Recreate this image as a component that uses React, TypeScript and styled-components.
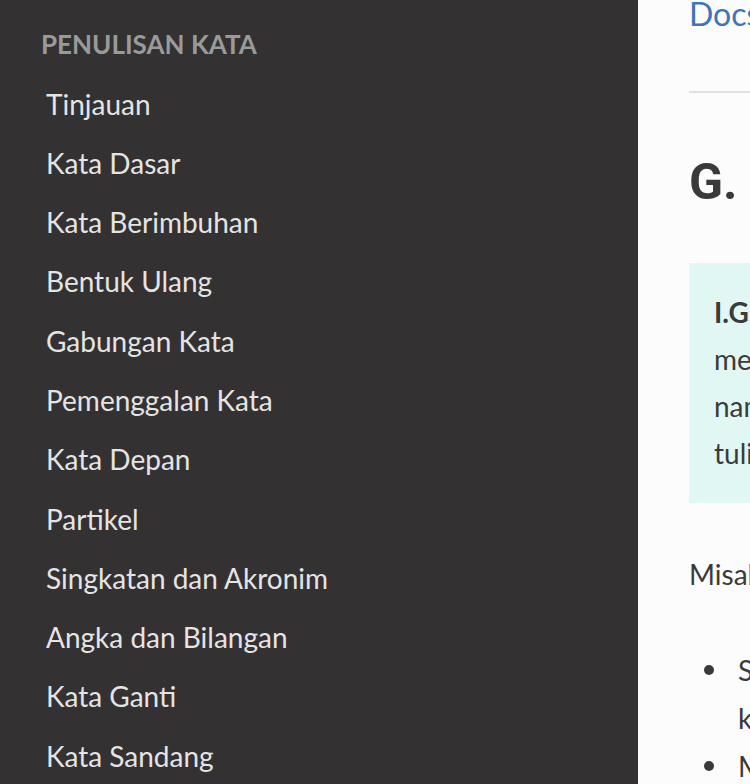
import React from 'react';
import styled, { createGlobalStyle } from 'styled-components';

const GlobalStyle = createGlobalStyle`
  html, body {
    margin: 0;
    padding: 0;
    height: 100%;
    overflow: hidden;
    background: #fcfcfc;
  }
  #root {
    height: 100%;
  }
`;

const Page = styled.div`
  display: flex;
  height: 784px;
  font-family: Lato, 'Open Sans', sans-serif;
  overflow: hidden;
`;

const Sidebar = styled.nav`
  flex: 0 0 638px;
  background: #333132;
  padding: 26px 0 0 40px;
  box-sizing: border-box;
`;

const SectionTitle = styled.div`
  font-size: 26px;
  font-weight: 700;
  line-height: 36px;
  color: #9a9a9a;
  padding-left: 1px;
  margin-bottom: 12.5px;
`;

const NavList = styled.ul`
  list-style: none;
  margin: 0;
  padding: 0;
`;

const NavItem = styled.li`
  font-size: 28px;
  line-height: 59.3px;
  color: #e4e4e4;
  padding-left: 6px;
  white-space: nowrap;
`;

const Main = styled.main`
  flex: 1;
  min-width: 0;
  overflow: hidden;
  padding: 0 0 0 51px;
  background: #fcfcfc;
  color: #3a3a3a;
`;

const Crumb = styled.a`
  display: block;
  font-size: 32px;
  line-height: 40px;
  margin-top: -6px;
  color: #3e75b6;
  text-decoration: none;
  white-space: nowrap;
`;

const Rule = styled.hr`
  border: none;
  border-top: 2px solid #e2e2e2;
  margin: 57px 0 0 0;
`;

const Heading = styled.h1`
  font-family: Roboto, 'Liberation Sans', sans-serif;
  font-weight: 700;
  font-size: 50px;
  line-height: 60px;
  margin: 59px 0 0 0;
  color: #3a3a3a;
  white-space: nowrap;
`;

const Callout = styled.div`
  margin-top: 51px;
  background: #e1f7f4;
  padding: 26px 0 26px 25px;
  font-size: 28px;
  line-height: 47px;
  color: #3b3b3b;
  white-space: nowrap;
`;

const Para = styled.p`
  margin: 48px 0 0 0;
  font-size: 28px;
  line-height: 47px;
  white-space: nowrap;
`;

const Bullets = styled.ul`
  list-style: none;
  margin: 48px 0 0 0;
  padding-left: 49px;
  font-size: 28px;
  line-height: 48px;
  white-space: nowrap;
`;

const Bullet = styled.li`
  position: relative;

  &::before {
    content: '';
    position: absolute;
    left: -34px;
    top: 19px;
    width: 10px;
    height: 10px;
    border-radius: 50%;
    background: #3a3a3a;
  }
`;

const sidebarItems = [
  'Tinjauan',
  'Kata Dasar',
  'Kata Berimbuhan',
  'Bentuk Ulang',
  'Gabungan Kata',
  'Pemenggalan Kata',
  'Kata Depan',
  'Partikel',
  'Singkatan dan Akronim',
  'Angka dan Bilangan',
  'Kata Ganti',
  'Kata Sandang',
];

export default function App() {
  return (
    <>
      <GlobalStyle />
      <Page>
        <Sidebar>
          <SectionTitle>PENULISAN KATA</SectionTitle>
          <NavList>
            {sidebarItems.map((item) => (
              <NavItem key={item}>{item}</NavItem>
            ))}
          </NavList>
        </Sidebar>
        <Main>
          <Crumb href="#">Docs / Penulisan Kata</Crumb>
          <Rule />
          <Heading>G. Partikel</Heading>
          <Callout>
            <strong>I.G.1</strong> Partikel <em>-lah</em>, <em>-kah</em>, dan <em>-tah</em> ditulis
            <br />
            mendahuluinya, serangkai dengan kata yang
            <br />
            namanya mendahului partikel itu dan
            <br />
            tulisan tetap dirangkaikan.
          </Callout>
          <Para>Misalnya:</Para>
          <Bullets>
            <Bullet>
              Siapakah gerangan dia yang datang
              <br />
              kemari tadi pagi?
            </Bullet>
            <Bullet>Manakah yang lebih baik?</Bullet>
          </Bullets>
        </Main>
      </Page>
    </>
  );
}
